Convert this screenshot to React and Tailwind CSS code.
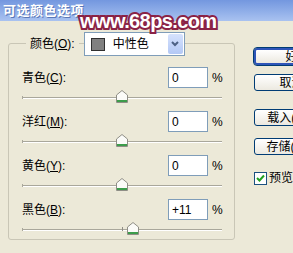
import React from 'react';

const rows = [
  { name: '青色', key: 'C', value: '0', pos: 50 },
  { name: '洋红', key: 'M', value: '0', pos: 50 },
  { name: '黄色', key: 'Y', value: '0', pos: 50 },
  { name: '黑色', key: 'B', value: '+11', pos: 55.5, mark: true },
];

const Thumb = ({ pos }) => (
  <svg
    className="absolute top-0 -translate-x-1/2"
    style={{ left: `${pos}%` }}
    width="12"
    height="13"
    viewBox="0 0 12 13"
  >
    <path d="M0.5 5 L6 0.5 L11.5 5 V12.5 H0.5 Z" fill="#fbfbf8" stroke="#8f8e86" />
    <path d="M1 10 H11 V12 H1 Z" fill="#3d9c4b" />
  </svg>
);

const Slider = ({ pos, mark }) => (
  <div className="relative mt-[2px] h-[13px] w-[200px]">
    <div className="absolute left-0 right-0 top-[7px] h-[2px] border-t border-[#a9a79b] bg-white" />
    <div className="absolute left-0 top-[6px] h-[3px] w-px bg-[#a9a79b]" />
    {mark && <div className="absolute left-[100px] top-[5px] h-[4px] w-px bg-[#8f8e86]" />}
    <Thumb pos={pos} />
  </div>
);

const Label = ({ name, k }) => (
  <span>
    {name}(<span className="underline underline-offset-1">{k}</span>):
  </span>
);

const Button = ({ children, primary }) => (
  <button
    className={`flex h-[17px] w-[75px] shrink-0 items-center justify-center whitespace-nowrap rounded-[3px] bg-gradient-to-b from-white to-[#ece9e0] text-[12px] leading-none ${
      primary ? 'border-2 border-[#2f55b8] outline outline-1 outline-[#003c74]' : 'border border-[#003c74]'
    }`}
  >
    {children}
  </button>
);

export default function App() {
  return (
    <div className="relative h-[253px] w-[293px] overflow-hidden bg-[#ece9d8] font-['Liberation_Sans','Noto_Sans_CJK_SC',sans-serif] text-[12px] text-black">
      {/* title bar */}
      <div className="flex h-[21px] items-center bg-gradient-to-b from-[#7397df] to-[#a9c2f0] pl-[3px]">
        <span className="text-[13px] font-bold leading-none tracking-[0.5px] text-white [text-shadow:1px_1px_0_#5a78b8]">
          可选颜色选项
        </span>
      </div>

      <div className="flex w-[340px]">
        {/* group box */}
        <div className="ml-[8px] mt-[22px] h-[197px] w-[227px] shrink-0 rounded-[3px] border border-[#c9c6b6]">
          <div className="-mt-[12px] ml-[17px] flex h-[24px] items-center">
            <span className="bg-[#ece9d8] px-[4px]">
              <Label name="颜色" k="O" />
            </span>
            <div className="ml-[5px] flex h-[24px] w-[101px] items-center border border-[#7f9db9] bg-white">
              <div className="ml-[6px] h-[13px] w-[14px] border border-[#303030] bg-[#808080]" />
              <span className="ml-[8px] flex-1">中性色</span>
              <div className="mr-px flex h-[20px] w-[15px] items-center justify-center rounded-[2px] bg-gradient-to-b from-[#d6e2fd] to-[#b3c8f5]">
                <svg width="8" height="6" viewBox="0 0 8 6">
                  <path d="M1 1 L4 4 L7 1" fill="none" stroke="#4d6185" strokeWidth="2" />
                </svg>
              </div>
            </div>
          </div>

          <div className="mt-[11px] flex flex-col gap-[8px] pl-[13px]">
            {rows.map((r) => (
              <div key={r.key} className="flex flex-col">
                <div className="flex h-[21px] items-center">
                  <span className="w-[146px]">
                    <Label name={r.name} k={r.key} />
                  </span>
                  <div className="flex h-[21px] w-[40px] items-center border border-[#7f9db9] bg-white pl-[3px]">
                    {r.value}
                  </div>
                  <span className="ml-[4px]">%</span>
                </div>
                <Slider pos={r.pos} mark={r.mark} />
              </div>
            ))}
          </div>
        </div>

        {/* buttons */}
        <div className="ml-[19px] mt-[27px] flex w-[75px] shrink-0 flex-col">
          <Button primary>好</Button>
          <div className="mt-[9px]">
            <Button>取消</Button>
          </div>
          <div className="mt-[18px]">
            <Button>载入(L)...</Button>
          </div>
          <div className="mt-[12px]">
            <Button>存储(S)...</Button>
          </div>
          <div className="mt-[14px] flex items-center whitespace-nowrap">
            <div className="flex h-[13px] w-[13px] shrink-0 items-center justify-center border border-[#1c5180] bg-white">
              <svg width="9" height="8" viewBox="0 0 9 8">
                <path d="M1 4 L3.5 6.5 L8 1.5" fill="none" stroke="#21a121" strokeWidth="2" />
              </svg>
            </div>
            <span className="ml-[2px]">预览(P)</span>
          </div>
        </div>
      </div>

      {/* watermark */}
      <div className="absolute left-[80px] top-[11px] text-[20px] font-bold leading-none tracking-[-0.6px] text-white [-webkit-text-stroke:4px_#8a2246] [paint-order:stroke_fill]">
        www.68ps.com
      </div>
    </div>
  );
}
